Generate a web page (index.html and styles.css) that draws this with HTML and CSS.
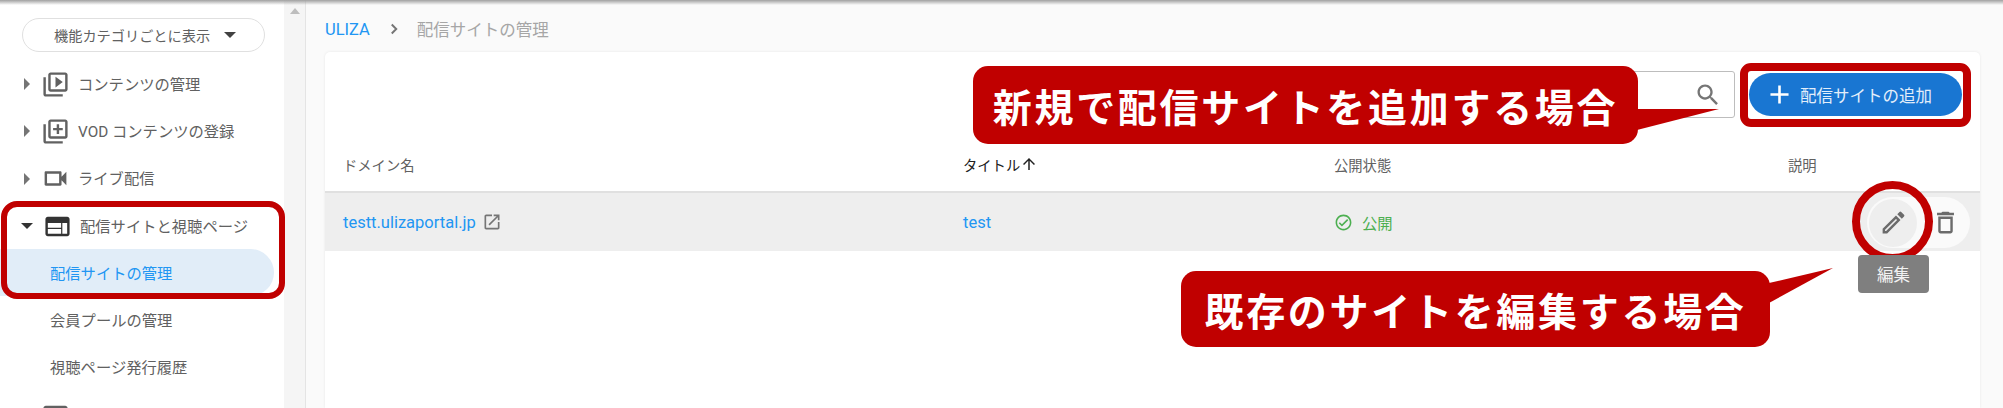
FILE: index.html
```html
<!DOCTYPE html>
<html lang="ja">
<head>
    <meta charset="UTF-8">
    <title>配信サイトの管理</title>
    <link rel="stylesheet" href="styles.css">
</head>
<body>

<div class="page">
    <aside class="sidebar">
        <button class="filter">機能カテゴリごとに表示<span class="caret-down"></span></button>
        <nav class="nav">
            <div class="nav-row">
                <span class="caret-right"></span>
                <svg class="nav-icon" viewBox="0 0 24 24"><path d="M4 6H2v14c0 1.100.9 2 2 2h14v-2H4V6zm16-4H8c-1.100 0-2 .9-2 2v12c0 1.100.9 2 2 2h12c1.100 0 2-.9 2-2V4c0-1.100-.9-2-2-2zm0 14H8V4h12v12zM12 5.500v9l6-4.500z"/></svg>
                <span>コンテンツの管理</span>
            </div>
            <div class="nav-row">
                <span class="caret-right"></span>
                <svg class="nav-icon" viewBox="0 0 24 24"><path d="M4 6H2v14c0 1.100.9 2 2 2h14v-2H4V6zm16-4H8c-1.100 0-2 .9-2 2v12c0 1.100.9 2 2 2h12c1.100 0 2-.9 2-2V4c0-1.100-.9-2-2-2zm0 14H8V4h12v12zm-7-2h2v-3h3V9h-3V6h-2v3h-3v2h3z"/></svg>
                <span>VOD コンテンツの登録</span>
            </div>
            <div class="nav-row">
                <span class="caret-right"></span>
                <svg class="nav-icon" viewBox="0 0 24 24"><path d="M15 8v8H5V8h10m1-2H4c-.55 0-1 .45-1 1v10c0 .55.45 1 1 1h12c.55 0 1-.45 1-1v-3.500l4 4v-11l-4 4V7c0-.55-.45-1-1-1z"/></svg>
                <span>ライブ配信</span>
            </div>
            <div class="nav-row">
                <span class="caret-open"></span>
                <svg class="nav-icon dark" viewBox="0 0 24 24"><path d="M20 4H4c-1.100 0-1.990.9-1.990 2L2 18c0 1.100.9 2 2 2h16c1.100 0 2-.9 2-2V6c0-1.100-.9-2-2-2zm-5 14H4v-4h11v4zm0-5H4V9h11v4zm5 5h-4V9h4v9z"/></svg>
                <span>配信サイトと視聴ページ</span>
            </div>
            <div class="nav-sub active">配信サイトの管理</div>
            <div class="nav-sub">会員プールの管理</div>
            <div class="nav-sub">視聴ページ発行履歴</div>
            <div class="nav-row">
                <span class="caret-right"></span>
                <svg class="nav-icon" viewBox="0 0 24 24"><path d="M20 4H4c-1.100 0-2 .9-2 2v12c0 1.100.9 2 2 2h16c1.100 0 2-.9 2-2V6c0-1.100-.9-2-2-2z"/></svg>
                <span>プレイヤーの管理</span>
            </div>
        </nav>
    </aside>

    <div class="scrolltrack"><span class="scroll-up"></span></div>

    <main class="main">
        <div class="crumbs">
            <a class="link">ULIZA</a>
            <svg class="crumb-sep" viewBox="0 0 24 24"><path d="M9 6l6 6-6 6" fill="none" stroke="#757575" stroke-width="2.600"/></svg>
            <span>配信サイトの管理</span>
        </div>

        <section class="card">
            <div class="toolbar">
                <div class="search">
                    <svg class="search-icon" viewBox="0 0 24 24"><path d="M15.500 14h-.79l-.28-.27C15.410 12.590 16 11.110 16 9.500 16 5.910 13.090 3 9.500 3S3 5.910 3 9.500 5.910 16 9.500 16c1.610 0 3.090-.59 4.230-1.570l.27.28v.79l5 4.990L20.490 19l-4.990-5zm-6 0C7.010 14 5 11.990 5 9.500S7.010 5 9.500 5 14 7.010 14 9.500 11.990 14 9.500 14z"/></svg>
                </div>
                <button class="add-btn">
                    <svg class="add-icon" viewBox="0 0 24 24"><path d="M19 13h-6v6h-2v-6H5v-2h6V5h2v6h6v2z"/></svg>
                    配信サイトの追加
                </button>
            </div>

            <div class="table-head">
                <div class="col-domain">ドメイン名</div>
                <div class="col-title sorted">タイトル<svg class="sort-icon" viewBox="0 0 24 24"><path d="M4 12l1.410 1.410L11 7.830V20h2V7.830l5.580 5.590L20 12l-8-8-8 8z"/></svg></div>
                <div class="col-status">公開状態</div>
                <div class="col-desc">説明</div>
            </div>

            <div class="table-row">
                <div class="col-domain link">
                    testt.ulizaportal.jp
                    <svg class="ext-icon" viewBox="0 0 24 24"><path d="M19 19H5V5h7V3H5c-1.110 0-2 .9-2 2v14c0 1.100.89 2 2 2h14c1.100 0 2-.9 2-2v-7h-2v7zM14 3v2h3.590l-9.830 9.830 1.410 1.410L19 6.410V10h2V3h-7z"/></svg>
                </div>
                <div class="col-title link">test</div>
                <div class="col-status published">
                    <svg class="check-icon" viewBox="0 0 24 24"><path d="M12 2C6.480 2 2 6.480 2 12s4.480 10 10 10 10-4.480 10-10S17.520 2 12 2zm0 18c-4.410 0-8-3.590-8-8s3.590-8 8-8 8 3.590 8 8-3.590 8-8 8zm4.590-12.420L10 14.170l-2.590-2.580L6 13l4 4 8-8-1.410-1.420z"/></svg>
                    公開
                </div>
                <div class="row-actions">
                    <span class="action hover">
                        <svg viewBox="0 0 24 24"><path d="M3 17.250V21h3.750L17.810 9.940l-3.750-3.750L3 17.250zM5.920 19H5v-.92l9.060-9.060.92.92L5.920 19zM20.710 7.040a.996.996 0 0 0 0-1.410l-2.340-2.340a.996.996 0 0 0-1.410 0l-1.830 1.830 3.750 3.750 1.830-1.830z"/></svg>
                    </span>
                    <span class="action">
                        <svg viewBox="0 0 24 24"><path d="M16 9v10H8V9h8m-1.500-6h-5l-1 1H5v2h14V4h-3.500l-1-1zM18 7H6v12c0 1.100.9 2 2 2h8c1.100 0 2-.9 2-2V7z"/></svg>
                    </span>
                </div>
            </div>
        </section>
    </main>
</div>

<!-- 注釈 (スクリーンショットの上に重ねた赤枠と吹き出し) -->
<div class="mark mark-nav"></div>
<div class="mark mark-add"></div>
<div class="mark mark-edit"></div>
<div class="tooltip">編集</div>
<svg class="tails" viewBox="0 0 2003 408"><path d="M1637 109L1719 109 1637 130z"/><path d="M1769 283L1833 268 1769 303z"/></svg>
<div class="callout callout-add">新規で配信サイトを追加する場合</div>
<div class="callout callout-edit">既存のサイトを編集する場合</div>

</body>
</html>
```

FILE: styles.css
```css
* {
    box-sizing: border-box;
}
html, body {
    margin: 0;
    height: 408px;
    overflow: hidden;
}
body {
    font-family: Roboto, "Noto Sans CJK JP", sans-serif;
    color: #616161;
    background-color: #fafafa;
    position: relative;
}
body::before {
    content: "";
    position: absolute;
    top: 0;
    left: 0;
    right: 0;
    height: 5px;
    background: linear-gradient(#a0a0a0, rgba(200, 200, 200, 0));
    z-index: 3;
}
.page {
    display: flex;
    height: 408px;
}
.link {
    color: #2196f3;
}

/* sidebar */
.sidebar {
    width: 284px;
    flex: none;
    height: 408px;
    overflow: hidden;
    background-color: #fff;
    padding-top: 18px;
}
.filter {
    display: flex;
    align-items: center;
    width: 243px;
    height: 34px;
    margin-left: 22px;
    padding: 0 0 0 31px;
    font: 14.2px Roboto, "Noto Sans CJK JP", sans-serif;
    color: #616161;
    background-color: #fff;
    border: 1px solid #e0e0e0;
    border-radius: 17px;
}
.caret-down {
    width: 0;
    height: 0;
    margin-left: 14px;
    border-left: 6px solid transparent;
    border-right: 6px solid transparent;
    border-top: 6px solid #424242;
}
.nav {
    margin-top: 8px;
}
.nav-row {
    display: flex;
    align-items: center;
    height: 47.300px;
    padding: 0 0 2px 24px;
    font-size: 15.300px;
}
.caret-right {
    width: 0;
    height: 0;
    margin: 3px 12px 0 0;
    border-top: 6px solid transparent;
    border-bottom: 6px solid transparent;
    border-left: 6px solid #757575;
}
.caret-open {
    width: 0;
    height: 0;
    margin: 2px 11px 0 -3px;
    border-left: 6px solid transparent;
    border-right: 6px solid transparent;
    border-top: 6px solid #333;
}
.nav-icon {
    width: 29px;
    height: 29px;
    margin: 3px 8px 0 -1px;
    fill: #616161;
}
.nav-icon.dark {
    fill: #333;
}
.nav-sub {
    display: flex;
    align-items: center;
    width: 274px;
    height: 47.300px;
    padding: 0 0 2px 50px;
    font-size: 15.300px;
    border-radius: 0 24px 24px 0;
}
.nav-sub.active {
    color: #2196f3;
    background-color: #e1edf8;
}
.scrolltrack {
    width: 22px;
    flex: none;
    background-color: #f5f5f5;
    border-right: 1px solid #e4e4e4;
    display: flex;
    justify-content: center;
    padding-top: 8px;
}
.scroll-up {
    width: 0;
    height: 0;
    border-left: 5px solid transparent;
    border-right: 5px solid transparent;
    border-bottom: 6px solid #bdbdbd;
}

/* main */
.main {
    flex: 1;
    padding: 0 23px 0 19px;
}
.crumbs {
    display: flex;
    align-items: center;
    height: 52px;
    padding-top: 6px;
    font-size: 16.500px;
    color: #a6a6a6;
}
.crumb-sep {
    width: 18px;
    height: 18px;
    margin: 0 14px 0 15px;
}
.card {
    height: 356px;
    background-color: #fff;
    border-radius: 5px 5px 0 0;
    box-shadow: 0 0 3px rgba(0, 0, 0, 0.08);
}
.toolbar {
    display: flex;
    justify-content: flex-end;
    align-items: flex-start;
    height: 91px;
    padding: 19px 18px 0 0;
}
.search {
    display: flex;
    align-items: center;
    justify-content: flex-end;
    width: 300px;
    height: 47px;
    padding-right: 12px;
    background-color: #fff;
    border: 1px solid #bdbdbd;
    border-radius: 3px;
}
.search-icon {
    width: 28px;
    height: 28px;
    fill: #757575;
}
.add-btn {
    display: flex;
    align-items: center;
    gap: 5px;
    width: 213px;
    height: 43px;
    margin: 2px 0 0 14px;
    padding: 0 0 0 15px;
    font: 16.500px Roboto, "Noto Sans CJK JP", sans-serif;
    color: #e3eefa;
    background-color: #1976d2;
    border: none;
    border-radius: 22px;
}
.add-icon {
    width: 31px;
    height: 31px;
    fill: #fff;
}
.table-head, .table-row {
    display: flex;
    align-items: center;
    padding-left: 18px;
}
.table-head {
    height: 50px;
    padding-bottom: 6px;
    font-size: 14.300px;
    border-bottom: 2px solid #e0e0e0;
}
.table-row {
    position: relative;
    height: 58px;
    background-color: #eee;
}
.col-domain {
    width: 620px;
    flex: none;
    display: flex;
    align-items: center;
}
.table-row .col-domain, .table-row .col-title {
    font-size: 16.500px;
}
.col-title {
    width: 371px;
    flex: none;
    display: flex;
    align-items: center;
}
.col-title.sorted {
    color: #212121;
}
.col-status {
    width: 454px;
    flex: none;
    display: flex;
    align-items: center;
}
.col-desc {
    flex: none;
}
.sort-icon {
    width: 18px;
    height: 18px;
    fill: #212121;
}
.ext-icon {
    width: 20px;
    height: 20px;
    margin-left: 6px;
    fill: #757575;
}
.published {
    font-size: 15.300px;
    color: #4caf50;
}
.check-icon {
    width: 19px;
    height: 19px;
    margin-right: 9px;
    fill: #4caf50;
}
.row-actions {
    position: absolute;
    top: 4px;
    right: 10px;
    display: flex;
    align-items: center;
    width: 103px;
    height: 51px;
    background-color: #fafafa;
    border-radius: 26px;
}
.action {
    display: flex;
    align-items: center;
    justify-content: center;
    width: 48px;
    height: 48px;
    margin-left: 2px;
    border-radius: 50%;
}
.action + .action {
    margin-left: 4px;
}
.action.hover {
    background-color: #eee;
}
.action svg {
    width: 29px;
    height: 29px;
    fill: #6b6b6b;
}

/* overlays */
.mark {
    position: absolute;
    border: 8px solid #c00000;
}
.mark-nav {
    left: 1px;
    top: 201px;
    width: 284px;
    height: 98px;
    border-width: 6px;
    border-radius: 16px;
}
.mark-add {
    left: 1740px;
    top: 63px;
    width: 231px;
    height: 64px;
    border-radius: 11px;
}
.mark-edit {
    left: 1852px;
    top: 181px;
    width: 81px;
    height: 81px;
    border-radius: 50%;
}
.tooltip {
    position: absolute;
    left: 1858px;
    top: 255px;
    display: flex;
    align-items: center;
    justify-content: center;
    width: 71px;
    height: 38px;
    font-size: 16.500px;
    color: #f2f2f2;
    background-color: #7f7f7f;
    border-radius: 4px;
}
.tails {
    position: absolute;
    top: 0;
    left: 0;
    width: 2003px;
    height: 408px;
    fill: #c00000;
}
.callout {
    position: absolute;
    display: flex;
    align-items: center;
    justify-content: center;
    height: 78px;
    font-family: "Noto Sans CJK JP", sans-serif;
    font-size: 39px;
    font-weight: 700;
    letter-spacing: 2.700px;
    color: #fff;
    background-color: #c00000;
    border-radius: 15px;
}
.callout-add {
    left: 973px;
    top: 66px;
    width: 665px;
}
.callout-edit {
    left: 1181px;
    top: 271px;
    width: 589px;
    height: 76px;
}
```
